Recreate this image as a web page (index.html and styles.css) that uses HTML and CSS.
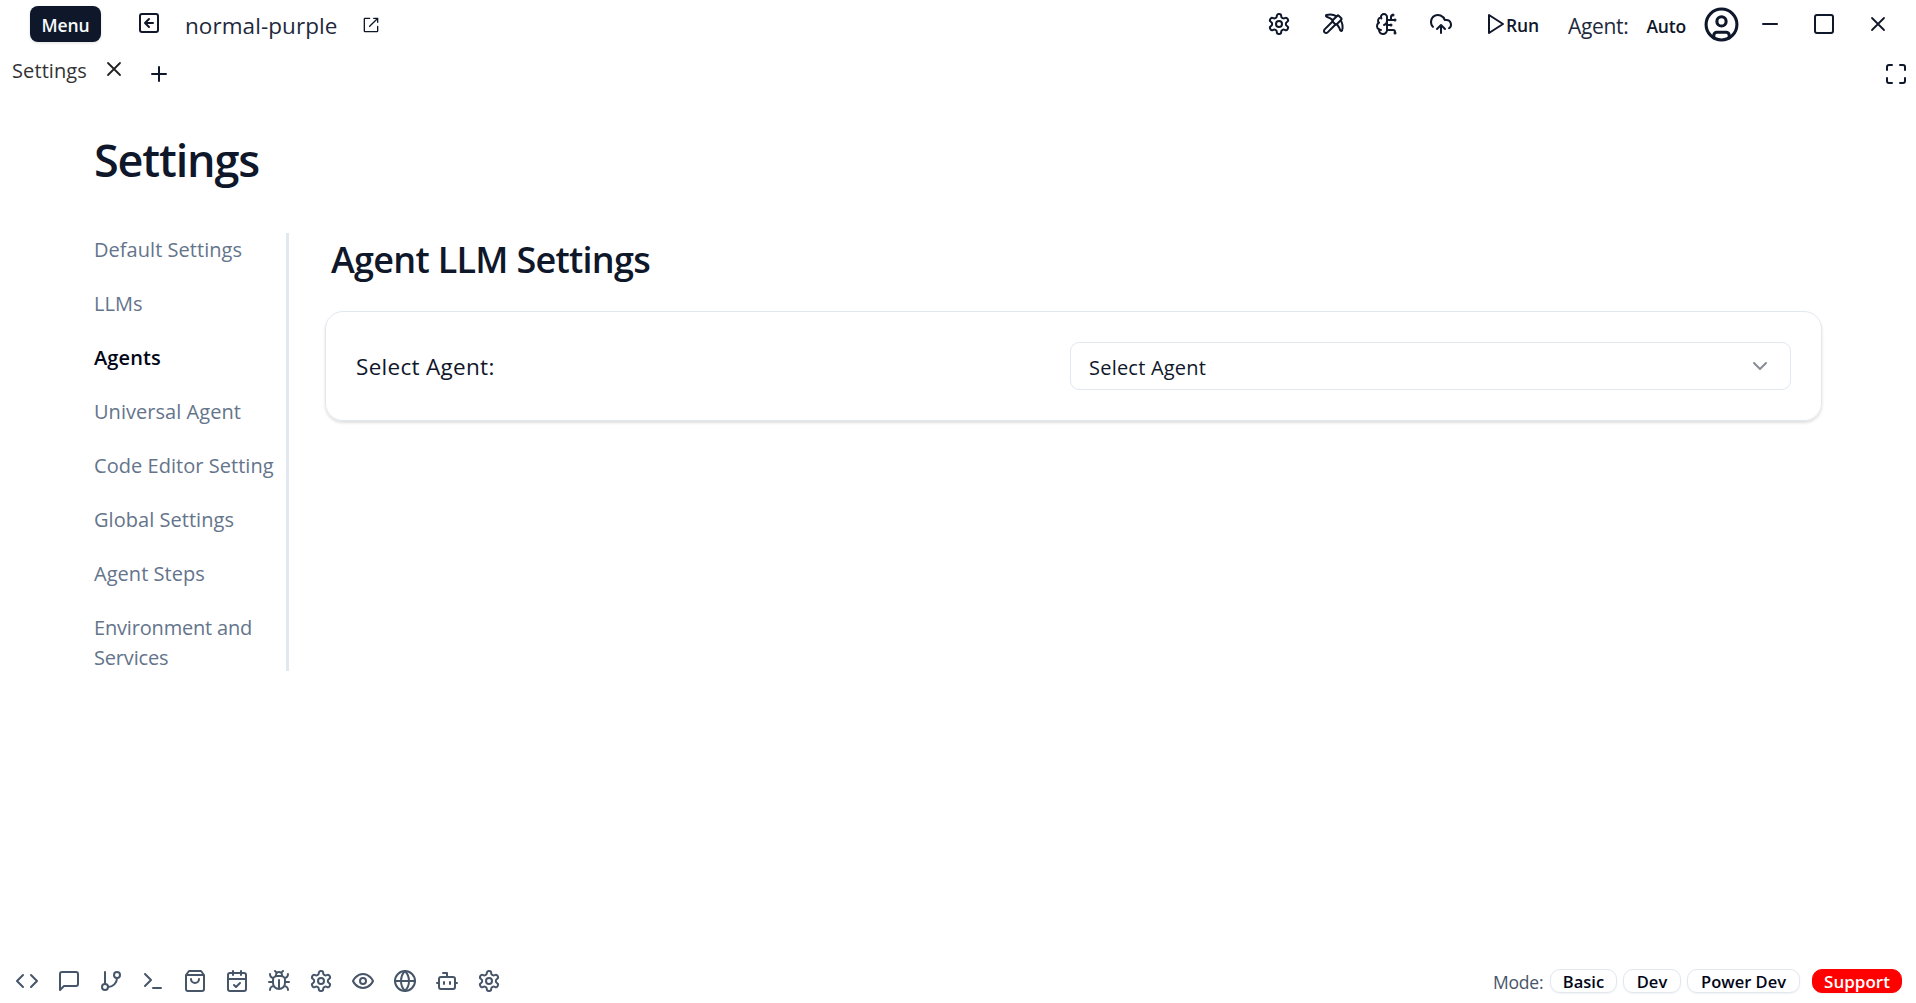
FILE: index.html
```html
<!DOCTYPE html>
<html lang="en">
<head>
<meta charset="utf-8">
<title>Settings</title>
<link rel="stylesheet" href="styles.css">
</head>
<body>
<svg class="defs" aria-hidden="true">
  <symbol id="gear" viewBox="0 0 24 24"><path d="M12.22 2h-.44a2 2 0 0 0-2 2v.18a2 2 0 0 1-1 1.73l-.43.25a2 2 0 0 1-2 0l-.15-.08a2 2 0 0 0-2.73.73l-.22.38a2 2 0 0 0 .73 2.73l.15.1a2 2 0 0 1 1 1.72v.51a2 2 0 0 1-1 1.74l-.15.09a2 2 0 0 0-.73 2.73l.22.38a2 2 0 0 0 2.73.73l.15-.08a2 2 0 0 1 2 0l.43.25a2 2 0 0 1 1 1.73V20a2 2 0 0 0 2 2h.44a2 2 0 0 0 2-2v-.18a2 2 0 0 1 1-1.73l.43-.25a2 2 0 0 1 2 0l.15.08a2 2 0 0 0 2.73-.73l.22-.39a2 2 0 0 0-.73-2.73l-.15-.08a2 2 0 0 1-1-1.74v-.5a2 2 0 0 1 1-1.74l.15-.09a2 2 0 0 0 .73-2.73l-.22-.38a2 2 0 0 0-2.73-.73l-.15.08a2 2 0 0 1-2 0l-.43-.25a2 2 0 0 1-1-1.73V4a2 2 0 0 0-2-2z"/><circle cx="12" cy="12" r="3"/></symbol>
</svg>

<header class="topbar">
  <div class="topbar-left">
    <button class="menu-btn">Menu</button>
    <svg class="icon back" viewBox="0 0 24 24"><rect x="3" y="3" width="18" height="18" rx="2"/><path d="m12 8-4 4 4 4M16 12H8"/></svg>
    <span class="project">normal-purple</span>
    <svg class="external" viewBox="0 0 15 15"><path d="M3 2a1 1 0 0 0-1 1v9a1 1 0 0 0 1 1h9a1 1 0 0 0 1-1V8.5a.5.5 0 0 0-1 0V12H3V3h3.5a.5.5 0 0 0 0-1H3zm9.85.15a.5.5 0 0 1 .15.35v3a.5.5 0 0 1-1 0V3.7L6.85 8.85a.5.5 0 1 1-.7-.7L11.3 3H9.5a.5.5 0 0 1 0-1h3a.5.5 0 0 1 .35.15z"/></svg>
  </div>
  <div class="topbar-right">
    <div class="tools">
      <svg class="icon"><use href="#gear"/></svg>
      <svg class="icon" viewBox="0 0 24 24"><path d="M14.531 12.469 6.619 20.38a1 1 0 1 1-3-3l7.912-7.912"/><path d="M15.686 4.314A12.5 12.5 0 0 0 5.461 2.958 1 1 0 0 0 5.58 4.71a22 22 0 0 1 6.318 3.393"/><path d="M17.7 3.7a1 1 0 0 0-1.4 0l-4.6 4.6a1 1 0 0 0 0 1.4l2.6 2.6a1 1 0 0 0 1.4 0l4.6-4.6a1 1 0 0 0 0-1.4z"/><path d="M19.686 8.314a12.501 12.501 0 0 1 1.356 10.225 1 1 0 0 1-1.751-.119 22 22 0 0 0-3.393-6.319"/></svg>
      <svg class="icon" viewBox="0 0 24 24"><path d="M12 5a3 3 0 1 0-5.997.125 4 4 0 0 0-2.526 5.77 4 4 0 0 0 .556 6.588A4 4 0 1 0 12 18Z"/><path d="M9 13a4.5 4.5 0 0 0 3-4M6.003 5.125A3 3 0 0 0 6.401 6.5M3.477 10.896a4 4 0 0 1 .585-.396M6 18a4 4 0 0 1-1.967-.516M12 13h4M12 18h6a2 2 0 0 1 2 2v1M12 8h8M16 8V5a2 2 0 0 1 2-2"/><circle cx="16" cy="13" r=".5"/><circle cx="18" cy="3" r=".5"/><circle cx="20" cy="21" r=".5"/><circle cx="20" cy="8" r=".5"/></svg>
      <svg class="icon" viewBox="0 0 24 24"><path d="M12 13v8M4 14.899A7 7 0 1 1 15.71 8h1.79a4.5 4.5 0 0 1 2.5 8.242M8 17l4-4 4 4"/></svg>
    </div>
    <div class="run"><svg class="icon" viewBox="0 0 24 24"><path d="M5 3l14 9-14 9z"/></svg><span>Run</span></div>
    <span class="agent-label">Agent:</span>
    <span class="agent-value">Auto</span>
    <svg class="icon user" viewBox="0 0 24 24"><circle cx="12" cy="12" r="10"/><circle cx="12" cy="10" r="3"/><path d="M7 20.662V19a2 2 0 0 1 2-2h6a2 2 0 0 1 2 2v1.662"/></svg>
    <div class="window-controls">
      <svg class="icon" viewBox="0 0 24 24"><path d="M5 12h14"/></svg>
      <svg class="icon" viewBox="0 0 24 24"><rect x="3" y="3" width="18" height="18" rx="2"/></svg>
      <svg class="icon" viewBox="0 0 24 24"><path d="M18 6 6 18M6 6l12 12"/></svg>
    </div>
  </div>
</header>

<nav class="tabs">
  <span class="tab">Settings</span>
  <svg class="icon close" viewBox="0 0 24 24"><path d="M18 6 6 18M6 6l12 12"/></svg>
  <svg class="icon add" viewBox="0 0 24 24"><path d="M5 12h14M12 5v14"/></svg>
  <svg class="icon expand" viewBox="0 0 24 24"><path d="M8 3H5a2 2 0 0 0-2 2v3M21 8V5a2 2 0 0 0-2-2h-3M3 16v3a2 2 0 0 0 2 2h3M16 21h3a2 2 0 0 0 2-2v-3"/></svg>
</nav>

<main class="page">
  <h1 class="page-title">Settings</h1>
  <div class="columns">
    <nav class="side">
      <a class="side-link">Default Settings</a>
      <a class="side-link">LLMs</a>
      <a class="side-link active">Agents</a>
      <a class="side-link">Universal Agent</a>
      <a class="side-link">Code Editor Setting</a>
      <a class="side-link">Global Settings</a>
      <a class="side-link">Agent Steps</a>
      <a class="side-link long">Environment and Services</a>
    </nav>
    <section class="content">
      <h2 class="section-title">Agent LLM Settings</h2>
      <div class="card">
        <span class="field-label">Select Agent:</span>
        <div class="select"><span>Select Agent</span><svg class="chevron" viewBox="0 0 24 24"><path d="m6 9 6 6 6-6"/></svg></div>
      </div>
    </section>
  </div>
</main>

<footer class="statusbar">
  <div class="status-icons">
    <svg class="icon" viewBox="0 0 24 24"><path d="m16 18 6-6-6-6M8 6l-6 6 6 6"/></svg>
    <svg class="icon" viewBox="0 0 24 24"><path d="M21 15a2 2 0 0 1-2 2H7l-4 4V5a2 2 0 0 1 2-2h14a2 2 0 0 1 2 2z"/></svg>
    <svg class="icon" viewBox="0 0 24 24"><path d="M6 3v12"/><circle cx="18" cy="6" r="3"/><circle cx="6" cy="18" r="3"/><path d="M18 9a9 9 0 0 1-9 9"/></svg>
    <svg class="icon" viewBox="0 0 24 24"><path d="m4 17 6-6-6-6M12 19h8"/></svg>
    <svg class="icon" viewBox="0 0 24 24"><path d="M6 2 3 6v14a2 2 0 0 0 2 2h14a2 2 0 0 0 2-2V6l-3-4ZM3 6h18M16 10a4 4 0 0 1-8 0"/></svg>
    <svg class="icon" viewBox="0 0 24 24"><path d="M8 2v4M16 2v4"/><rect x="3" y="4" width="18" height="18" rx="2"/><path d="M3 10h18M9 16l2 2 4-4"/></svg>
    <svg class="icon" viewBox="0 0 24 24"><path d="m8 2 1.880 1.880M14.120 3.880 16 2M9 7.130v-1a3.003 3.003 0 1 1 6 0v1"/><path d="M12 20c-3.300 0-6-2.700-6-6v-3a4 4 0 0 1 4-4h4a4 4 0 0 1 4 4v3c0 3.300-2.700 6-6 6M12 20v-9M6.530 9C4.600 8.800 3 7.100 3 5M6 13H2M3 21c0-2.100 1.700-3.900 3.800-4M20.970 5c0 2.100-1.600 3.800-3.500 4M22 13h-4M17.200 17c2.100.1 3.800 1.900 3.800 4"/></svg>
    <svg class="icon"><use href="#gear"/></svg>
    <svg class="icon" viewBox="0 0 24 24"><path d="M2 12s3-7 10-7 10 7 10 7-3 7-10 7-10-7-10-7Z"/><circle cx="12" cy="12" r="3"/></svg>
    <svg class="icon" viewBox="0 0 24 24"><circle cx="12" cy="12" r="10"/><path d="M12 2a14.500 14.500 0 0 0 0 20 14.500 14.500 0 0 0 0-20M2 12h20"/></svg>
    <svg class="icon" viewBox="0 0 24 24"><path d="M12 8V4H8"/><rect x="4" y="8" width="16" height="12" rx="2"/><path d="M2 14h2M20 14h2M15 13v2M9 13v2"/></svg>
    <svg class="icon"><use href="#gear"/></svg>
  </div>
  <div class="modes">
    <span class="mode-label">Mode:</span>
    <button class="pill basic">Basic</button>
    <button class="pill dev">Dev</button>
    <button class="pill power">Power Dev</button>
    <button class="pill support">Support</button>
  </div>
</footer>
</body>
</html>
```
FILE: styles.css
```css
* { box-sizing: border-box; }

body {
  margin: 0;
  height: 100vh;
  overflow: hidden;
  display: flex;
  flex-direction: column;
  background: #fff;
  color: #0f172a;
  font-family: "Open Sans", "Noto Sans", sans-serif;
  font-size: 20px;
}

h1, h2 { margin: 0; }
button { font-family: inherit; margin: 0; }
span, button { white-space: nowrap; }
.defs { display: none; }

.icon {
  width: 24px;
  height: 24px;
  flex: none;
  fill: none;
  stroke: currentColor;
  stroke-width: 2;
  stroke-linecap: round;
  stroke-linejoin: round;
}

/* Top bar */
.topbar {
  height: 48px;
  display: flex;
  justify-content: space-between;
  align-items: center;
  padding: 0 26px 0 30px;
}
.topbar-left, .topbar-right, .tools, .run, .window-controls {
  display: flex;
  align-items: center;
}
.menu-btn {
  width: 71px;
  height: 36px;
  padding: 1px 0 0;
  border: 0;
  border-radius: 8px;
  background: #0f172a;
  color: #f8fafc;
  font-size: 17.5px;
  font-weight: 600;
  letter-spacing: -0.1px;
  box-shadow: 0 1px 3px rgba(0, 0, 0, .12);
}
.back { margin: -2px 0 0 36px; }
.project { margin-left: 24px; padding-top: 3px; font-size: 22.5px; letter-spacing: .06px; width: 152px; color: #1e293b; }
.external { width: 20px; height: 20px; margin: 2px 0 0 24px; fill: #0f172a; }
.tools { gap: 30px; }
.run { width: 56px; margin-left: 31px; font-size: 17.5px; font-weight: 600; letter-spacing: -0.15px; }
.run .icon { margin-right: -2px; }
.run span { padding-top: 1px; }
.agent-label { margin-left: 28px; padding-top: 3px; font-size: 21px; letter-spacing: -0.3px; color: #1e293b; }
.agent-value { margin-left: 18px; padding-top: 3px; font-size: 17.5px; font-weight: 600; letter-spacing: -0.2px; }
.user { width: 37px; height: 37px; margin-left: 17px; }
.window-controls { gap: 30px; margin-left: 18px; }
.window-controls .icon:last-child { stroke-width: 1.8; }

/* Tab strip */
.tabs {
  height: 52px;
  display: flex;
  align-items: center;
  padding: 0 8px 0 12px;
}
.tab { width: 75px; margin-top: -7px; color: #333; letter-spacing: .1px; }
.close { margin: -10px 0 0 15px; color: #222; stroke-width: 1.8; }
.add { margin-left: 21px; }
.expand { margin-left: auto; }

/* Page */
.page { flex: 1; padding: 30px 93px 0 94px; }
.page-title {
  height: 60px;
  line-height: 60px;
  font-size: 45px;
  font-weight: 600;
  letter-spacing: -1.15px;
}
.columns { display: flex; margin-top: 43px; }
.side {
  width: 195px;
  height: 438px;
  padding-top: 2px;
  flex: none;
  display: flex;
  flex-direction: column;
  gap: 24px;
  border-right: 3px solid #e2e8f0;
}
.side-link { line-height: 30px; color: #64748b; letter-spacing: .04px; }
.side-link.active { color: #020617; font-weight: 600; letter-spacing: .1px; }
.side-link.long { letter-spacing: -0.18px; }
.content { flex: 1; margin-left: 36px; }
.section-title {
  height: 50px;
  padding: 2px 0 0 6px;
  line-height: 50px;
  font-size: 36px;
  font-weight: 600;
  letter-spacing: -0.72px;
}
.card {
  height: 110px;
  margin: 28px 1px 0 0;
  padding: 0 30px;
  display: flex;
  align-items: center;
  justify-content: space-between;
  border: 1px solid #e2e8f0;
  border-radius: 18px;
  box-shadow: 0 2px 3px rgba(0, 0, 0, .13);
}
.field-label { padding-top: 1px; font-size: 22.5px; letter-spacing: .3px; }
.select {
  width: 721px;
  height: 48px;
  padding: 0 18px;
  display: flex;
  align-items: center;
  justify-content: space-between;
  border: 1px solid #e2e8f0;
  border-radius: 9px;
  letter-spacing: .22px;
}
.select span { padding-top: 2px; }
.chevron {
  width: 24px;
  height: 24px;
  fill: none;
  stroke: #868b95;
  stroke-width: 2;
  stroke-linejoin: round;
  stroke-linecap: round;
}

/* Status bar */
.statusbar {
  height: 44px;
  display: flex;
  align-items: center;
  justify-content: space-between;
  padding: 0 14px 0 15px;
}
.status-icons { display: flex; gap: 18px; color: #475569; }
.modes { display: flex; align-items: center; font-size: 17px; }
.mode-label { width: 57px; padding-top: 1px; font-size: 17.5px; letter-spacing: -0.2px; color: #475569; }
.pill {
  height: 24px;
  padding: 1px 0 0;
  line-height: 21px;
  border: 1px solid #e2e8f0;
  border-radius: 10px;
  background: #fff;
  color: #020617;
  font-size: 16.5px;
  font-weight: 600;
  letter-spacing: 0;
  box-shadow: 0 1px 2px rgba(0, 0, 0, .06);
}
.basic { width: 67px; }
.dev { width: 58px; margin-left: 6px; }
.power { width: 113px; margin-left: 6px; }
.support {
  width: 90px;
  margin-left: 12px;
  border-color: #f00;
  background: #f00;
  color: #fff;
  font-size: 17px;
}
```
